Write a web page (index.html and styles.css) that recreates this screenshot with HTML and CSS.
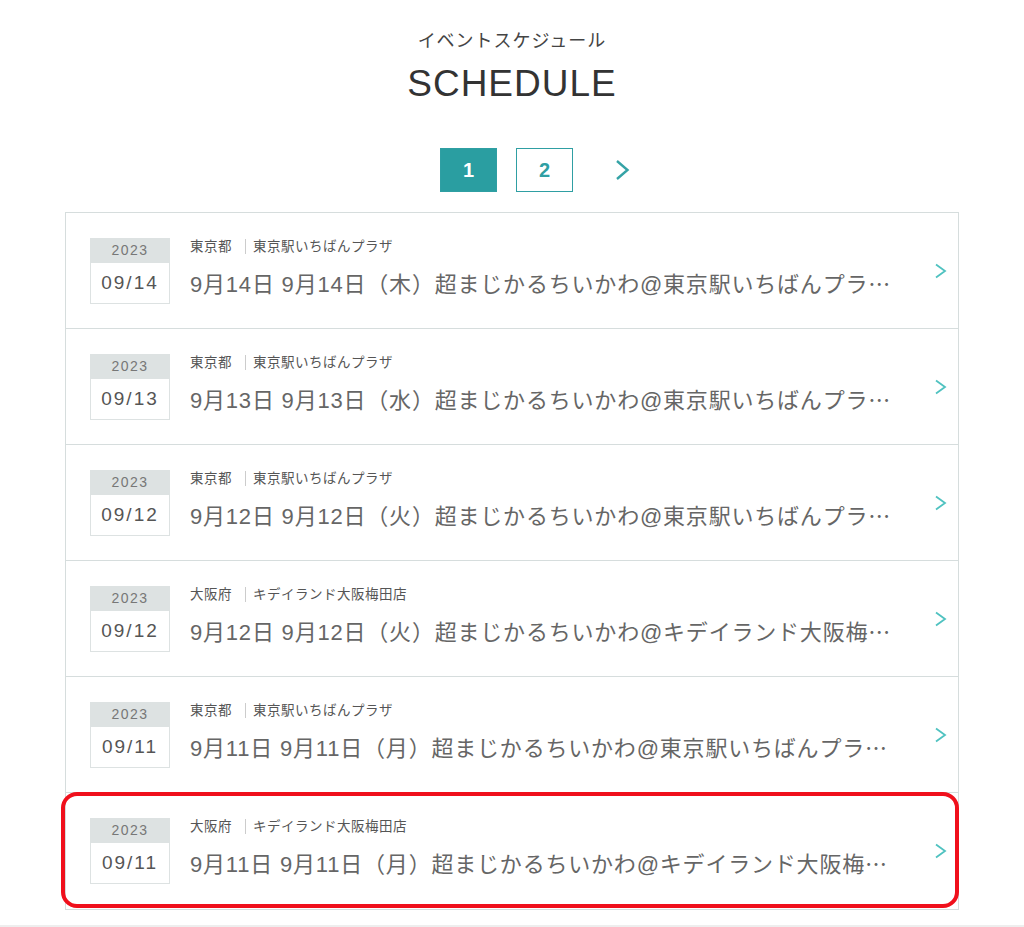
FILE: index.html
```html
<!DOCTYPE html>
<html lang="ja">
<head>
    <meta charset="UTF-8">
    <meta name="viewport" content="width=device-width, initial-scale=1.0">
    <title>SCHEDULE</title>
    <link rel="stylesheet" href="styles.css">
</head>
<body>
    <div class="schedule">
        <p class="head-sub">イベントスケジュール</p>
        <h2 class="head-main">SCHEDULE</h2>

        <div class="pager">
            <span class="page current">1</span>
            <a class="page" href="#">2</a>
            <a class="page-next" href="#">
                <svg width="15" height="22" viewBox="0 0 15 22"><path d="M2 2 L12.5 11 L2 20" fill="none" stroke="#35a3a6" stroke-width="2.4"/></svg>
            </a>
        </div>

        <ul class="event-list">
            <li class="event">
                <div class="date"><span class="year">2023</span><span class="day">09/14</span></div>
                <div class="info">
                    <p class="place"><span>東京都</span><span class="shop">東京駅いちばんプラザ</span></p>
                    <p class="title">9月14日 9月14日（木）超まじかるちいかわ@東京駅いちばんプラ<span class="dots">…</span></p>
                </div>
                <svg class="arrow" width="13" height="16" viewBox="0 0 13 16"><path d="M2 1.5 L11 8 L2 14.5" fill="none" stroke="#4fc2c0" stroke-width="1.8"/></svg>
            </li>
            <li class="event">
                <div class="date"><span class="year">2023</span><span class="day">09/13</span></div>
                <div class="info">
                    <p class="place"><span>東京都</span><span class="shop">東京駅いちばんプラザ</span></p>
                    <p class="title">9月13日 9月13日（水）超まじかるちいかわ@東京駅いちばんプラ<span class="dots">…</span></p>
                </div>
                <svg class="arrow" width="13" height="16" viewBox="0 0 13 16"><path d="M2 1.5 L11 8 L2 14.5" fill="none" stroke="#4fc2c0" stroke-width="1.8"/></svg>
            </li>
            <li class="event">
                <div class="date"><span class="year">2023</span><span class="day">09/12</span></div>
                <div class="info">
                    <p class="place"><span>東京都</span><span class="shop">東京駅いちばんプラザ</span></p>
                    <p class="title">9月12日 9月12日（火）超まじかるちいかわ@東京駅いちばんプラ<span class="dots">…</span></p>
                </div>
                <svg class="arrow" width="13" height="16" viewBox="0 0 13 16"><path d="M2 1.5 L11 8 L2 14.5" fill="none" stroke="#4fc2c0" stroke-width="1.8"/></svg>
            </li>
            <li class="event">
                <div class="date"><span class="year">2023</span><span class="day">09/12</span></div>
                <div class="info">
                    <p class="place"><span>大阪府</span><span class="shop">キデイランド大阪梅田店</span></p>
                    <p class="title">9月12日 9月12日（火）超まじかるちいかわ@キデイランド大阪梅<span class="dots">…</span></p>
                </div>
                <svg class="arrow" width="13" height="16" viewBox="0 0 13 16"><path d="M2 1.5 L11 8 L2 14.5" fill="none" stroke="#4fc2c0" stroke-width="1.8"/></svg>
            </li>
            <li class="event">
                <div class="date"><span class="year">2023</span><span class="day">09/11</span></div>
                <div class="info">
                    <p class="place"><span>東京都</span><span class="shop">東京駅いちばんプラザ</span></p>
                    <p class="title">9月11日 9月11日（月）超まじかるちいかわ@東京駅いちばんプラ<span class="dots">…</span></p>
                </div>
                <svg class="arrow" width="13" height="16" viewBox="0 0 13 16"><path d="M2 1.5 L11 8 L2 14.5" fill="none" stroke="#4fc2c0" stroke-width="1.8"/></svg>
            </li>
            <li class="event marked">
                <div class="date"><span class="year">2023</span><span class="day">09/11</span></div>
                <div class="info">
                    <p class="place"><span>大阪府</span><span class="shop">キデイランド大阪梅田店</span></p>
                    <p class="title">9月11日 9月11日（月）超まじかるちいかわ@キデイランド大阪梅<span class="dots">…</span></p>
                </div>
                <svg class="arrow" width="13" height="16" viewBox="0 0 13 16"><path d="M2 1.5 L11 8 L2 14.5" fill="none" stroke="#4fc2c0" stroke-width="1.8"/></svg>
            </li>
        </ul>
    </div>
    <div class="page-foot"></div>
</body>
</html>
```

FILE: styles.css
```css
body {
    margin: 0;
    background: #fff;
    font-family: "Liberation Sans", "Noto Sans CJK JP", sans-serif;
    color: #444;
}
.schedule {
    width: 894px;
    margin: 0 auto;
    padding-top: 30px;
    text-align: center;
}
.head-sub {
    margin: 0;
    font-size: 18px;
    line-height: 22px;
    letter-spacing: 1px;
    color: #444;
}
.head-main {
    margin: 10px 0 0;
    font-size: 37px;
    line-height: 44px;
    font-weight: normal;
    letter-spacing: 1px;
    color: #333;
}
.pager {
    display: flex;
    justify-content: center;
    align-items: center;
    gap: 19px;
    margin-top: 42px;
    padding-left: 46px;
}
.page {
    display: flex;
    align-items: center;
    justify-content: center;
    width: 55px;
    height: 42px;
    border: 1px solid #2f9fa3;
    color: #2f9fa3;
    font-size: 20px;
    font-weight: bold;
    text-decoration: none;
}
.page.current {
    background: #2a9ea1;
    color: #fff;
}
.page-next {
    display: flex;
    margin-left: 23px;
}
.event-list {
    list-style: none;
    margin: 20px 0 0;
    padding: 0;
    border: 1px solid #d6dddd;
    text-align: left;
}
.event {
    position: relative;
    display: flex;
    align-items: center;
    height: 115px;
    padding: 0 11px 0 24px;
    border-bottom: 1px solid #d6dddd;
}
.event:last-child {
    height: 116px;
    border-bottom: none;
}
.date {
    display: flex;
    flex-direction: column;
    width: 80px;
    flex-shrink: 0;
}
.year {
    height: 25px;
    line-height: 25px;
    background: #dde2e2;
    text-align: center;
    font-size: 14px;
    letter-spacing: 1.5px;
    color: #777;
}
.day {
    height: 40px;
    line-height: 39px;
    border: 1px solid #dde2e2;
    border-top: none;
    text-align: center;
    font-size: 19px;
    letter-spacing: 2px;
    color: #555;
}
.info {
    flex: 1;
    min-width: 0;
    margin-left: 20px;
    margin-top: -4px;
}
.place {
    margin: 0;
    font-size: 13.5px;
    line-height: 18px;
    letter-spacing: 0.5px;
    color: #555;
}
.shop {
    margin-left: 13px;
    padding-left: 7px;
    border-left: 1px solid #ccc;
}
.title {
    margin: 11px 0 0;
    font-size: 22px;
    line-height: 30px;
    letter-spacing: 0.8px;
    color: #666;
    white-space: nowrap;
    overflow: hidden;
}
.dots {
    font-family: "Noto Sans CJK JP", sans-serif;
}
.arrow {
    flex-shrink: 0;
    margin-left: 30px;
}
.marked::after {
    content: "";
    position: absolute;
    top: -1px;
    left: -5px;
    right: -1px;
    bottom: 1px;
    border: 4px solid #f0101c;
    border-radius: 16px;
}
.page-foot {
    margin-top: 15px;
    height: 3px;
    background: #eee;
}
```
